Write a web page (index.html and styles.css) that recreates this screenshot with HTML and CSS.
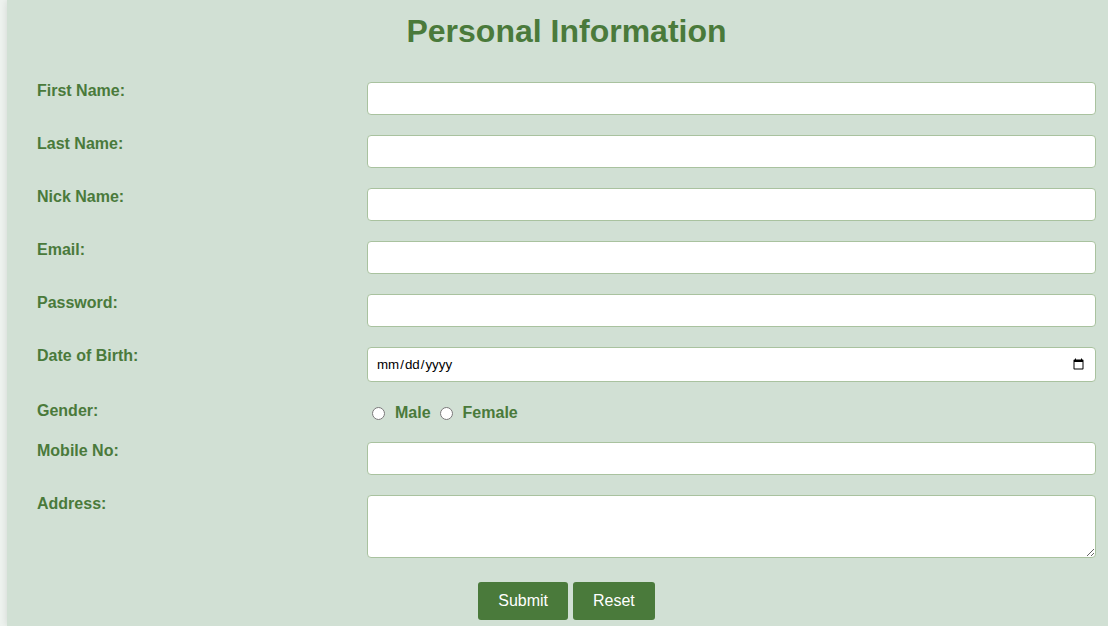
FILE: index.html
```html
<!DOCTYPE html>
<html lang="en">
<head>
<meta charset="utf-8">
<title>Personal Information</title>
<link rel="stylesheet" href="styles.css">
</head>
<body>
<div class="page">
  <h1 class="title">Personal Information</h1>
  <form class="form">
    <div class="row"><label class="label" for="fn">First Name:</label><div class="field"><input class="input" id="fn" type="text"></div></div>
    <div class="row"><label class="label" for="ln">Last Name:</label><div class="field"><input class="input" id="ln" type="text"></div></div>
    <div class="row"><label class="label" for="nn">Nick Name:</label><div class="field"><input class="input" id="nn" type="text"></div></div>
    <div class="row"><label class="label" for="em">Email:</label><div class="field"><input class="input" id="em" type="email"></div></div>
    <div class="row"><label class="label" for="pw">Password:</label><div class="field"><input class="input" id="pw" type="password"></div></div>
    <div class="row"><label class="label" for="dob">Date of Birth:</label><div class="field"><input class="input" id="dob" type="date"></div></div>
    <div class="row"><span class="label">Gender:</span><div class="field radios"><input type="radio" name="g" id="gm"> <label class="radio-label" for="gm">Male</label> <input type="radio" name="g" id="gf"> <label class="radio-label" for="gf">Female</label></div></div>
    <div class="row"><label class="label" for="mob">Mobile No:</label><div class="field"><input class="input" id="mob" type="tel"></div></div>
    <div class="row"><label class="label" for="ad">Address:</label><div class="field"><textarea class="input area" id="ad" rows="3"></textarea></div></div>
    <div class="actions"><button class="btn" type="submit">Submit</button> <button class="btn" type="reset">Reset</button></div>
  </form>
</div>
</body>
</html>
```
FILE: styles.css
```css
html, body {
  margin: 0;
  padding: 0;
  background: #eef3ef;
  font-family: "Liberation Sans", Arial, sans-serif;
  overflow: hidden;
}
.page {
  margin-left: 7px;
  min-height: 100vh;
  background: #d1e0d4;
  box-shadow: 0 0 8px rgba(0, 0, 0, 0.12);
  padding: 13px 12px 0 30px;
  box-sizing: border-box;
}
.title {
  margin: 0 0 32px;
  text-align: center;
  font-size: 32px;
  font-weight: bold;
  color: #4a7a3b;
}
.form {
  display: flex;
  flex-direction: column;
  gap: 20px;
}
.row {
  display: grid;
  grid-template-columns: 330px 1fr;
  align-items: start;
}
.label {
  font-size: 16px;
  font-weight: bold;
  color: #4a7a3b;
}
.field {
  display: flex;
}
.input {
  flex: 1;
  box-sizing: border-box;
  padding: 8px;
  border: 1px solid #a9c29f;
  border-radius: 4px;
  background: #fff;
  font-size: 13.333px;
  font-family: "Liberation Sans", Arial, sans-serif;
  margin: 0;
}
.area {
  display: block;
  height: 63px;
  resize: vertical;
  font-family: "Liberation Mono", monospace;
}
.radios {
  align-items: center;
  font-size: 16px;
  padding-top: 2px;
}
.radios input {
  margin: 0 3px 0 5px;
}
.radio-label {
  font-weight: bold;
  color: #4a7a3b;
  margin-left: 7px;
  margin-right: 4px;
}
.actions {
  display: flex;
  justify-content: center;
  gap: 5px;
  margin-top: 4px;
}
.btn {
  background: #4a7a3b;
  color: #fff;
  border: none;
  border-radius: 3px;
  padding: 10px 20px;
  font-size: 16px;
  font-family: "Liberation Sans", Arial, sans-serif;
  line-height: 18px;
}
```
